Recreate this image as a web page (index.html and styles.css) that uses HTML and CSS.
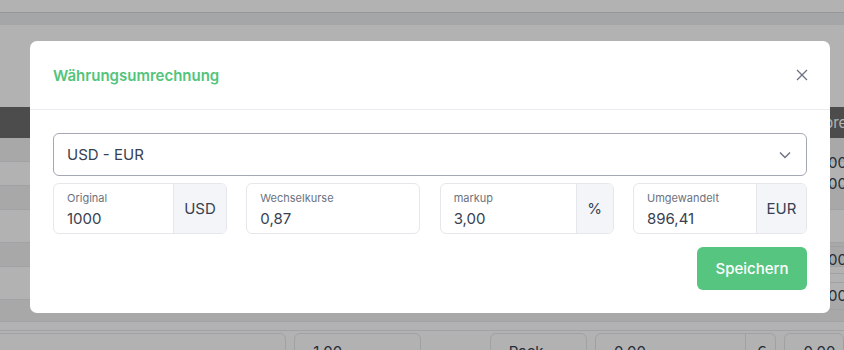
FILE: index.html
```html
<!DOCTYPE html>
<html lang="de">
<head>
  <meta charset="UTF-8" />
  <meta name="viewport" content="width=device-width, initial-scale=1.0" />
  <title>Währungsumrechnung</title>
  <link rel="stylesheet" href="styles.css">
</head>
<body>
  <div class="page">
    <div class="topbar"></div>
    <div class="subbar"></div>
    <div class="spacer"></div>
    <div class="table">
      <div class="row head"><span class="head-cell">Einzelpreis</span></div>
      <div class="row striped"><span class="cell-right boxed r1">0,00</span></div>
      <div class="row"><span class="cell-right boxed r2">0,00</span></div>
      <div class="row striped"></div>
      <div class="row tall"></div>
      <div class="row striped"><span class="cell-right input r3">0,00</span></div>
      <div class="row tall"><span class="cell-right input r4">0,00</span></div>
      <div class="row striped short"></div>
      <div class="row line"></div>
      <div class="bottom-row">
        <span class="field wide"></span>
        <span class="field mid">1,00</span>
        <span class="gap"></span>
        <span class="field pack">Pack <small>⌄</small></span>
        <span class="field price">0,00<em>€</em></span>
        <span class="field last">0,00</span>
      </div>
    </div>
  </div>

  <div class="backdrop"></div>

  <div class="modal">
    <div class="modal-header">
      <h3>Währungsumrechnung</h3>
      <button class="close" aria-label="Schließen">
        <svg width="12" height="12" viewBox="0 0 12 12"><path d="M1 1L11 11M11 1L1 11" stroke="#6b7280" stroke-width="1.3" fill="none"/></svg>
      </button>
    </div>
    <div class="modal-body">
      <div class="select">
        <span>USD - EUR</span>
        <svg width="12" height="8" viewBox="0 0 12 8"><path d="M1 1.5L6 6.5L11 1.5" stroke="#6b7280" stroke-width="1.4" fill="none"/></svg>
      </div>
      <div class="fields">
        <div class="group">
          <div class="float">
            <label>Original</label>
            <div class="value">1000</div>
          </div>
          <div class="addon usd">USD</div>
        </div>
        <div class="group">
          <div class="float">
            <label>Wechselkurse</label>
            <div class="value">0,87</div>
          </div>
        </div>
        <div class="group">
          <div class="float">
            <label>markup</label>
            <div class="value">3,00</div>
          </div>
          <div class="addon pct">%</div>
        </div>
        <div class="group">
          <div class="float">
            <label>Umgewandelt</label>
            <div class="value">896,41</div>
          </div>
          <div class="addon eur">EUR</div>
        </div>
      </div>
      <div class="actions">
        <button class="save">Speichern</button>
      </div>
    </div>
  </div>
</body>
</html>
```

FILE: styles.css
```css
body {
  margin: 0;
  font-family: Inter, "Liberation Sans", sans-serif;
  background: #ffffff;
  color: #374151;
  overflow: hidden;
}
.page {
  width: 844px;
  height: 350px;
  overflow: hidden;
}
.topbar {
  height: 12px;
  background: #ffffff;
  border-bottom: 1px solid #d7d9dd;
}
.subbar {
  height: 12px;
  background: #eceef1;
}
.spacer {
  height: 82px;
}
.row {
  height: 24px;
  display: flex;
  justify-content: flex-end;
  align-items: center;
  border-bottom: 1px solid #e7e9ee;
  box-sizing: border-box;
  font-size: 15px;
}
.row.head {
  height: 31px;
  background: #6e6e6e;
  color: #ffffff;
  border: none;
  justify-content: flex-start;
}
.head-cell {
  padding-left: 782px;
  white-space: nowrap;
}
.row.tall {
  height: 33px;
}
.row.short {
  height: 22px;
}
.row.striped {
  background: #f1f1f2;
}
.row.line {
  height: 9px;
}
.cell-right {
  width: 52px;
  padding-left: 22px;
  box-sizing: border-box;
  white-space: nowrap;
}
.cell-right.boxed {
  border-left: 1px solid #e5e7eb;
  height: 24px;
  line-height: 24px;
}
.cell-right.input {
  border: 1px solid #e5e7eb;
  border-right: none;
  border-radius: 6px 0 0 6px;
  height: 28px;
  line-height: 26px;
}
.r1 { margin-top: 26px; }
.r2 { margin-top: 21px; }
.r3 { margin-top: 10px; }
.r4 { margin-top: 25px; }
.bottom-row {
  display: flex;
  gap: 8px;
  padding-top: 2px;
}
.field {
  height: 30px;
  border: 1px solid #e5e7eb;
  border-radius: 6px;
  box-sizing: border-box;
  font-size: 15px;
  padding: 8px 0 0 18px;
  background: #ffffff;
  white-space: nowrap;
}
.field.wide { width: 293px; margin-left: -4px; }
.field.mid { width: 128px; }
.gap { width: 53px; }
.field.pack { width: 98px; }
.field.pack small { margin-left: 16px; font-size: 12px; }
.field.price { width: 183px; position: relative; }
.field.price em {
  font-style: normal;
  position: absolute;
  right: 0;
  top: 0;
  width: 30px;
  height: 28px;
  box-sizing: border-box;
  border-left: 1px solid #e5e7eb;
  padding: 8px 0 0 10px;
}
.field.last { width: 60px; }

.backdrop {
  position: fixed;
  top: 0; left: 0;
  right: 0; bottom: 0;
  background: rgba(0, 0, 0, 0.3);
}
.modal {
  position: absolute;
  left: 30px;
  top: 41px;
  width: 800px;
  background: #ffffff;
  border-radius: 7px;
}
.modal-header {
  height: 68px;
  padding: 0 23px;
  display: flex;
  align-items: center;
  justify-content: space-between;
  border-bottom: 1px solid #e9ebef;
}
.modal-header h3 {
  margin: 0;
  font-size: 15px;
  font-weight: 600;
  color: #52c47c;
}
.close {
  background: none;
  border: none;
  padding: 0;
  margin-right: -1px;
  display: flex;
  cursor: pointer;
}
.modal-body {
  padding: 23px;
}
.select {
  height: 43px;
  border: 1px solid #a4a8b2;
  border-radius: 6px;
  box-sizing: border-box;
  display: flex;
  align-items: center;
  justify-content: space-between;
  padding: 0 15px 0 13px;
  font-size: 15px;
  color: #374151;
}
.fields {
  display: grid;
  grid-template-columns: repeat(4, 1fr);
  gap: 19.3px;
  margin-top: 7px;
}
.group {
  height: 51px;
  display: flex;
  border: 1px solid #e5e7eb;
  border-radius: 6px;
  box-sizing: border-box;
  overflow: hidden;
}
.float {
  flex: 1;
  padding: 7px 13px 0;
}
.float label {
  display: block;
  font-size: 11px;
  color: #6b7280;
  line-height: 14px;
}
.value {
  font-size: 15px;
  line-height: 20px;
  margin-top: 4px;
  color: #374151;
}
.addon {
  background: #f3f5f8;
  border-left: 1px solid #e5e7eb;
  display: flex;
  align-items: center;
  justify-content: center;
  font-size: 15px;
  color: #374151;
}
.addon.usd { width: 52px; }
.addon.pct { width: 36px; }
.addon.eur { width: 49px; }
.actions {
  display: flex;
  justify-content: flex-end;
  margin-top: 13px;
}
.save {
  width: 110px;
  height: 43px;
  border: none;
  border-radius: 6px;
  background: #56c57f;
  color: #ffffff;
  font-family: inherit;
  font-size: 15px;
  font-weight: 500;
  cursor: pointer;
}
```
